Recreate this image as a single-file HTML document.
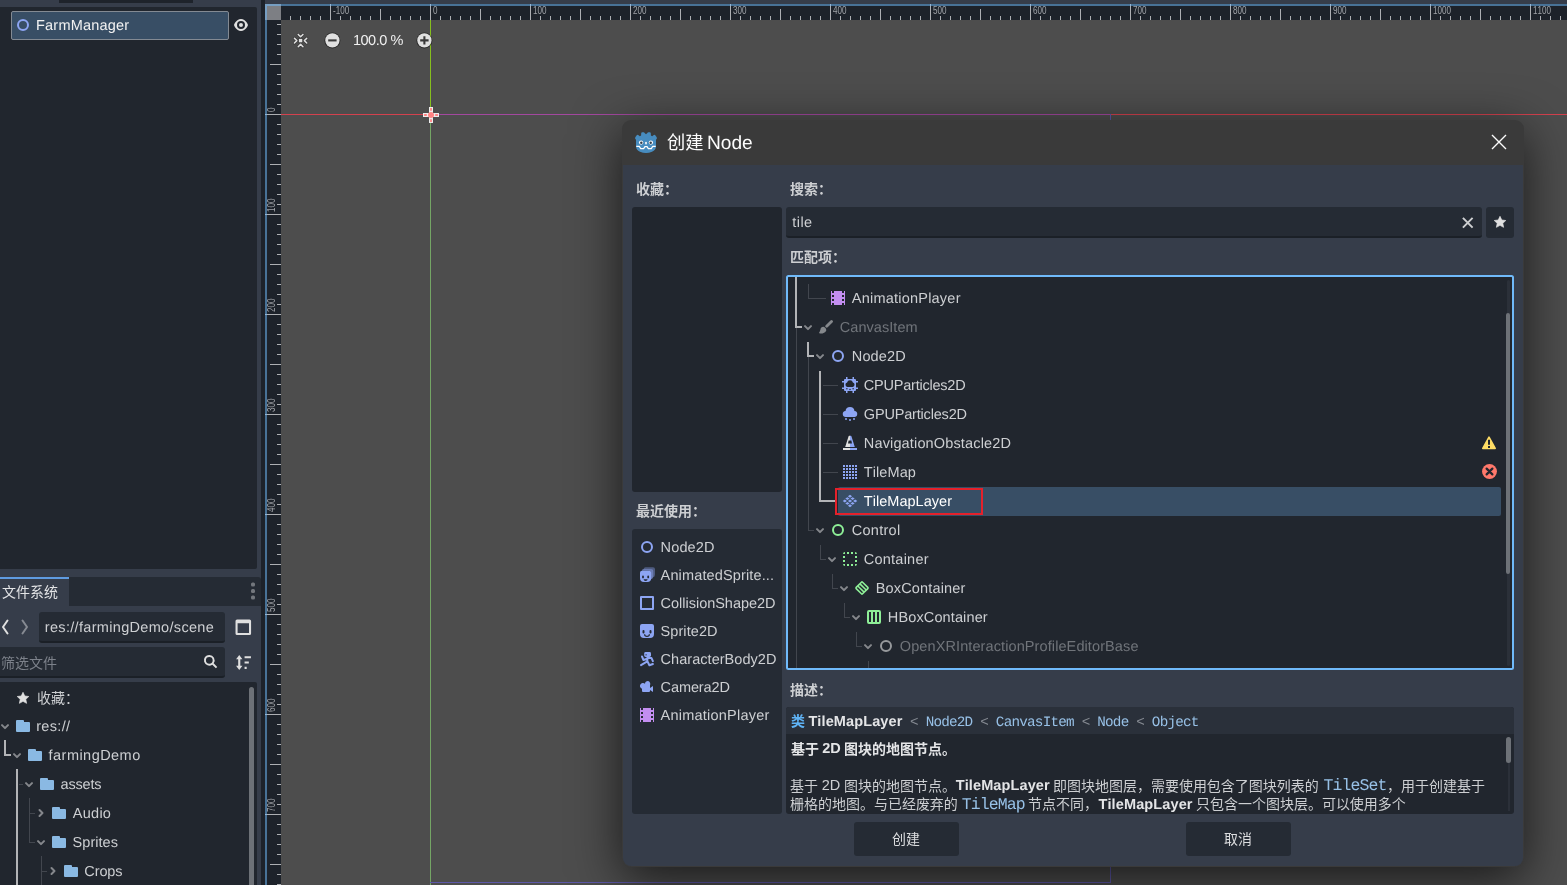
<!DOCTYPE html>
<html lang="zh"><head><meta charset="utf-8"><title>Godot - Create Node</title>
<style>
html,body{margin:0;padding:0;background:#363d4a;}
body{width:1567px;height:885px;overflow:hidden;font-family:"Liberation Sans",sans-serif;}
#root{will-change:transform;position:relative;width:1567px;height:885px;overflow:hidden;background:#363d4a;}
.b{position:absolute;box-sizing:border-box;}
.t{position:absolute;line-height:1;white-space:pre;font-family:"Liberation Sans",sans-serif;font-kerning:none;text-rendering:geometricPrecision;}
.t.m{font-family:"Liberation Mono",monospace;}
.cj{position:absolute;overflow:visible;}
.cj text{font-family:"Liberation Sans","Noto Sans CJK SC",sans-serif;white-space:pre;}
.cj text.bd{font-weight:bold;}
.ic{position:absolute;overflow:visible;}
.rl{position:absolute;line-height:1;white-space:pre;font-family:"Liberation Sans",sans-serif;font-size:10.5px;color:#a0a3a8;font-kerning:none;}
.rv{transform-origin:0 0;transform:rotate(-90deg);}
</style></head>
<body>
<div id="root">
<div class="b " style="left:59px;top:0px;width:134px;height:3px;background:#1e232b;"></div>
<div class="b " style="left:-4px;top:7px;width:261px;height:562px;background:#21262e;border-radius:2px"></div>
<div class="b " style="left:11px;top:11px;width:218px;height:29px;background:#384e65;border:1px solid #838a93;border-radius:2px"></div>
<svg class="ic" style="left:15px;top:17px;" width="16" height="16" viewBox="0 0 16 16"><circle cx="8" cy="8" r="5" fill="none" stroke="#8da5f3" stroke-width="2"/></svg>
<span class="t " style="left:36px;top:18.72px;font-size:14.5px;letter-spacing:0.21px;color:#f2f2f2">FarmManager</span>
<svg class="ic" style="left:233px;top:17px;" width="16" height="16" viewBox="0 0 16 16"><path fill="#e0e0e0" d="M8 2C3 2 1 8 1 8s2 6 7 6 7-6 7-6-2-6-7-6zm0 2a4 4 0 0 1 0 8 4 4 0 0 1 0-8zm0 2a2 2 0 0 0 0 4 2 2 0 0 0 0-4z"/></svg>
<div class="b " style="left:-4px;top:577px;width:265px;height:29px;background:#252b34;border-radius:3px 3px 0 0"></div>
<div class="b " style="left:-4px;top:577px;width:73px;height:29px;background:#363d4a;border-top:2px solid #5f9be0"></div>
<svg class="cj" role="img" aria-label="文件系统" style="left:1.8px;top:583px" width="56" height="19.6" viewBox="0 0 56 19.6" fill="#e3e4e6"><text x="0" y="14" font-size="14">文件系统</text></svg>
<svg class="ic" style="left:245px;top:583.3px;" width="16" height="16" viewBox="0 0 16 16"><g fill="#fff" fill-opacity=".36"><rect x="6" y="-.4" width="4" height="4" rx="1.500"/><rect x="6" y="6" width="4" height="4" rx="1.500"/><rect x="6" y="12.400" width="4" height="4" rx="1.500"/></g></svg>
<svg class="ic" style="left:-3px;top:619px;" width="16" height="16" viewBox="0 0 16 16"><path fill="none" stroke="#e0e0e0" stroke-width="2" stroke-linecap="round" stroke-linejoin="round" d="M10.5 1.5 6 8l4.5 6.5"/></svg>
<svg class="ic" style="left:17px;top:619px;" width="16" height="16" viewBox="0 0 16 16"><path fill="none" stroke="#fff" stroke-opacity=".4" stroke-width="2" stroke-linecap="round" stroke-linejoin="round" d="M5.5 1.5 10 8l-4.5 6.5"/></svg>
<div class="b " style="left:39px;top:612px;width:186px;height:31px;background:#252b34;border-radius:3px;border-bottom:2px solid #1b2027"></div>
<span class="t " style="left:44.8px;top:620.72px;font-size:14.5px;letter-spacing:0.32px;color:#cdcfd2">res://farmingDemo/scene</span>
<svg class="ic" style="left:234.7px;top:618.5px;" width="16.6" height="16.6" viewBox="0 0 16 16"><path fill="#e0e0e0" d="M2 .5A1.5 1.5 0 0 0 .5 2v12A1.5 1.5 0 0 0 2 15.500h12a1.5 1.5 0 0 0 1.500-1.500V2A1.5 1.5 0 0 0 14 .5zm.5 3.500h11v9.500h-11z"/></svg>
<div class="b " style="left:-4px;top:647px;width:229px;height:31px;background:#252b34;border-radius:3px;border-bottom:2px solid #1b2027"></div>
<svg class="cj" role="img" aria-label="筛选文件" style="left:1.2px;top:654px" width="56" height="19.6" viewBox="0 0 56 19.6" fill="#7c818a"><text x="0" y="14" font-size="14">筛选文件</text></svg>
<svg class="ic" style="left:202.85px;top:654.25px;" width="15.5" height="15.5" viewBox="0 0 16 16"><path fill="#e0e0e0" d="M6.5 1a5.5 5.5 0 1 0 3.1 10l3.7 3.7 1.4-1.4L11 9.6A5.5 5.5 0 0 0 6.5 1zm0 2a3.5 3.5 0 0 1 0 7 3.5 3.5 0 0 1 0-7z"/></svg>
<svg class="ic" style="left:234.7px;top:653.7px;" width="17" height="17" viewBox="0 0 16 16"><path fill="#e0e0e0" d="M4 1L1 5h2v6H1l3 4 3-4H5V5h2zm5 1v2h6V2zm0 5v2h4V7zm0 5v2h2v-2z"/></svg>
<div class="b " style="left:-4px;top:682px;width:261px;height:210px;background:#21262e;border-radius:2px"></div>
<div class="b " style="left:248.5px;top:687px;width:5px;height:210px;background:#6d7177;border-radius:2.5px"></div>
<svg class="ic" style="left:16px;top:691px;" width="14" height="14" viewBox="0 0 16 16"><path fill="#e0e0e0" d="M8 1.5l2 4.2 4.6.6-3.4 3.2.9 4.6L8 11.8l-4.1 2.3.9-4.6L1.4 6.3 6 5.7z" stroke="#e0e0e0" stroke-width=".8" stroke-linejoin="round"/></svg>
<svg class="cj" role="img" aria-label="收藏：" style="left:37px;top:689px" width="42" height="19.6" viewBox="0 0 42 19.6" fill="#cdcfd2"><text x="0" y="14" font-size="14">收藏：</text></svg>
<svg class="ic" style="left:-2.8px;top:718px;" width="16" height="16" viewBox="0 0 16 16"><path fill="none" stroke="#fff" stroke-opacity=".45" stroke-width="2" stroke-linecap="round" stroke-linejoin="round" d="M5 7.100l3 3 3-3"/></svg>
<svg class="ic" style="left:15px;top:718px;" width="16" height="16" viewBox="0 0 16 16"><path fill="#8ab9e3" d="M2 2a1 1 0 0 0-1 1v10a1 1 0 0 0 1 1h12a1 1 0 0 0 1-1V5a1 1 0 0 0-1-1H9V3a1 1 0 0 0-1-1z"/></svg>
<span class="t " style="left:36.2px;top:719.72px;font-size:14.5px;letter-spacing:0.32px;color:#cdcfd2">res://</span>
<div class="b " style="left:4px;top:740px;width:2px;height:16px;background:#b3b4b7;"></div>
<div class="b " style="left:4px;top:754px;width:7px;height:2px;background:#b3b4b7;"></div>
<svg class="ic" style="left:9.2px;top:747px;" width="16" height="16" viewBox="0 0 16 16"><path fill="none" stroke="#fff" stroke-opacity=".45" stroke-width="2" stroke-linecap="round" stroke-linejoin="round" d="M5 7.100l3 3 3-3"/></svg>
<svg class="ic" style="left:27px;top:747px;" width="16" height="16" viewBox="0 0 16 16"><path fill="#8ab9e3" d="M2 2a1 1 0 0 0-1 1v10a1 1 0 0 0 1 1h12a1 1 0 0 0 1-1V5a1 1 0 0 0-1-1H9V3a1 1 0 0 0-1-1z"/></svg>
<span class="t " style="left:48.6px;top:748.72px;font-size:14.5px;letter-spacing:0.46px;color:#cdcfd2">farmingDemo</span>
<div class="b " style="left:16px;top:769px;width:2px;height:120px;background:#b3b4b7;"></div>
<div class="b " style="left:19px;top:784px;width:4px;height:1px;background:#42464e;"></div>
<svg class="ic" style="left:21px;top:776px;" width="16" height="16" viewBox="0 0 16 16"><path fill="none" stroke="#fff" stroke-opacity=".45" stroke-width="2" stroke-linecap="round" stroke-linejoin="round" d="M5 7.100l3 3 3-3"/></svg>
<svg class="ic" style="left:39px;top:776px;" width="16" height="16" viewBox="0 0 16 16"><path fill="#8ab9e3" d="M2 2a1 1 0 0 0-1 1v10a1 1 0 0 0 1 1h12a1 1 0 0 0 1-1V5a1 1 0 0 0-1-1H9V3a1 1 0 0 0-1-1z"/></svg>
<span class="t " style="left:60.5px;top:777.72px;font-size:14.5px;letter-spacing:-0.16px;color:#cdcfd2">assets</span>
<div class="b " style="left:29px;top:798px;width:1px;height:45px;background:#42464e;"></div>
<div class="b " style="left:29px;top:813px;width:6px;height:1px;background:#42464e;"></div>
<div class="b " style="left:29px;top:842px;width:6px;height:1px;background:#42464e;"></div>
<svg class="ic" style="left:33px;top:805px;" width="16" height="16" viewBox="0 0 16 16"><path fill="none" stroke="#fff" stroke-opacity=".45" stroke-width="2" stroke-linecap="round" stroke-linejoin="round" d="M6.500 5l3 3-3 3"/></svg>
<svg class="ic" style="left:51px;top:805px;" width="16" height="16" viewBox="0 0 16 16"><path fill="#8ab9e3" d="M2 2a1 1 0 0 0-1 1v10a1 1 0 0 0 1 1h12a1 1 0 0 0 1-1V5a1 1 0 0 0-1-1H9V3a1 1 0 0 0-1-1z"/></svg>
<span class="t " style="left:72.8px;top:806.72px;font-size:14.5px;letter-spacing:0.26px;color:#cdcfd2">Audio</span>
<svg class="ic" style="left:33px;top:834px;" width="16" height="16" viewBox="0 0 16 16"><path fill="none" stroke="#fff" stroke-opacity=".45" stroke-width="2" stroke-linecap="round" stroke-linejoin="round" d="M5 7.100l3 3 3-3"/></svg>
<svg class="ic" style="left:51px;top:834px;" width="16" height="16" viewBox="0 0 16 16"><path fill="#8ab9e3" d="M2 2a1 1 0 0 0-1 1v10a1 1 0 0 0 1 1h12a1 1 0 0 0 1-1V5a1 1 0 0 0-1-1H9V3a1 1 0 0 0-1-1z"/></svg>
<span class="t " style="left:72.6px;top:835.72px;font-size:14.5px;letter-spacing:0.04px;color:#cdcfd2">Sprites</span>
<div class="b " style="left:41px;top:856px;width:1px;height:30px;background:#42464e;"></div>
<div class="b " style="left:41px;top:871px;width:6px;height:1px;background:#42464e;"></div>
<svg class="ic" style="left:45px;top:863px;" width="16" height="16" viewBox="0 0 16 16"><path fill="none" stroke="#fff" stroke-opacity=".45" stroke-width="2" stroke-linecap="round" stroke-linejoin="round" d="M6.500 5l3 3-3 3"/></svg>
<svg class="ic" style="left:63px;top:863px;" width="16" height="16" viewBox="0 0 16 16"><path fill="#8ab9e3" d="M2 2a1 1 0 0 0-1 1v10a1 1 0 0 0 1 1h12a1 1 0 0 0 1-1V5a1 1 0 0 0-1-1H9V3a1 1 0 0 0-1-1z"/></svg>
<span class="t " style="left:84.3px;top:864.72px;font-size:14.5px;letter-spacing:-0.1px;color:#cdcfd2">Crops</span>
<div class="b " style="left:261px;top:0px;width:4px;height:885px;background:#1d222a;"></div>
<div class="b " style="left:265px;top:4px;width:1302px;height:881px;background:#4d4d4d;"></div>
<div class="b " style="left:265px;top:4px;width:1302px;height:16px;background:#1d222a;"></div>
<div class="b " style="left:265px;top:4px;width:16px;height:881px;background:#1d222a;"></div>
<div class="b " style="left:265px;top:4px;width:16px;height:16px;background:#7d7f84;"></div>
<svg class="ic" style="left:0;top:0" width="1567" height="20" viewBox="0 0 1567 20"><path d="M290.5 16V20M300.5 16V20M310.5 16V20M320.5 16V20M330.5 4V20M340.5 16V20M350.5 16V20M360.5 16V20M370.5 16V20M380.5 9V20M390.5 16V20M400.5 16V20M410.5 16V20M420.5 16V20M430.5 4V20M440.5 16V20M450.5 16V20M460.5 16V20M470.5 16V20M480.5 9V20M490.5 16V20M500.5 16V20M510.5 16V20M520.5 16V20M530.5 4V20M540.5 16V20M550.5 16V20M560.5 16V20M570.5 16V20M580.5 9V20M590.5 16V20M600.5 16V20M610.5 16V20M620.5 16V20M630.5 4V20M640.5 16V20M650.5 16V20M660.5 16V20M670.5 16V20M680.5 9V20M690.5 16V20M700.5 16V20M710.5 16V20M720.5 16V20M730.5 4V20M740.5 16V20M750.5 16V20M760.5 16V20M770.5 16V20M780.5 9V20M790.5 16V20M800.5 16V20M810.5 16V20M820.5 16V20M830.5 4V20M840.5 16V20M850.5 16V20M860.5 16V20M870.5 16V20M880.5 9V20M890.5 16V20M900.5 16V20M910.5 16V20M920.5 16V20M930.5 4V20M940.5 16V20M950.5 16V20M960.5 16V20M970.5 16V20M980.5 9V20M990.5 16V20M1000.5 16V20M1010.5 16V20M1020.5 16V20M1030.5 4V20M1040.5 16V20M1050.5 16V20M1060.5 16V20M1070.5 16V20M1080.5 9V20M1090.5 16V20M1100.5 16V20M1110.5 16V20M1120.5 16V20M1130.5 4V20M1140.5 16V20M1150.5 16V20M1160.5 16V20M1170.5 16V20M1180.5 9V20M1190.5 16V20M1200.5 16V20M1210.5 16V20M1220.5 16V20M1230.5 4V20M1240.5 16V20M1250.5 16V20M1260.5 16V20M1270.5 16V20M1280.5 9V20M1290.5 16V20M1300.5 16V20M1310.5 16V20M1320.5 16V20M1330.5 4V20M1340.5 16V20M1350.5 16V20M1360.5 16V20M1370.5 16V20M1380.5 9V20M1390.5 16V20M1400.5 16V20M1410.5 16V20M1420.5 16V20M1430.5 4V20M1440.5 16V20M1450.5 16V20M1460.5 16V20M1470.5 16V20M1480.5 9V20M1490.5 16V20M1500.5 16V20M1510.5 16V20M1520.5 16V20M1530.5 4V20M1540.5 16V20M1550.5 16V20M1560.5 16V20" stroke="#adafb3" stroke-width="1" fill="none" shape-rendering="crispEdges"/></svg>
<svg class="ic" style="left:0;top:0" width="281" height="885" viewBox="0 0 281 885"><path d="M277 24.5H281M277 34.5H281M277 44.5H281M277 54.5H281M270 64.5H281M277 74.5H281M277 84.5H281M277 94.5H281M277 104.5H281M265 114.5H281M277 124.5H281M277 134.5H281M277 144.5H281M277 154.5H281M270 164.5H281M277 174.5H281M277 184.5H281M277 194.5H281M277 204.5H281M265 214.5H281M277 224.5H281M277 234.5H281M277 244.5H281M277 254.5H281M270 264.5H281M277 274.5H281M277 284.5H281M277 294.5H281M277 304.5H281M265 314.5H281M277 324.5H281M277 334.5H281M277 344.5H281M277 354.5H281M270 364.5H281M277 374.5H281M277 384.5H281M277 394.5H281M277 404.5H281M265 414.5H281M277 424.5H281M277 434.5H281M277 444.5H281M277 454.5H281M270 464.5H281M277 474.5H281M277 484.5H281M277 494.5H281M277 504.5H281M265 514.5H281M277 524.5H281M277 534.5H281M277 544.5H281M277 554.5H281M270 564.5H281M277 574.5H281M277 584.5H281M277 594.5H281M277 604.5H281M265 614.5H281M277 624.5H281M277 634.5H281M277 644.5H281M277 654.5H281M270 664.5H281M277 674.5H281M277 684.5H281M277 694.5H281M277 704.5H281M265 714.5H281M277 724.5H281M277 734.5H281M277 744.5H281M277 754.5H281M270 764.5H281M277 774.5H281M277 784.5H281M277 794.5H281M277 804.5H281M265 814.5H281M277 824.5H281M277 834.5H281M277 844.5H281M277 854.5H281M270 864.5H281M277 874.5H281M277 884.5H281" stroke="#adafb3" stroke-width="1" fill="none" shape-rendering="crispEdges"/></svg>
<span class="rl" style="left:333.4px;top:4.5px;transform-origin:0 0;transform:scaleX(.77)">-100</span>
<span class="rl" style="left:433.4px;top:4.5px;transform-origin:0 0;transform:scaleX(.77)">0</span>
<span class="rl" style="left:533.4px;top:4.5px;transform-origin:0 0;transform:scaleX(.77)">100</span>
<span class="rl" style="left:633.4px;top:4.5px;transform-origin:0 0;transform:scaleX(.77)">200</span>
<span class="rl" style="left:733.4px;top:4.5px;transform-origin:0 0;transform:scaleX(.77)">300</span>
<span class="rl" style="left:833.4px;top:4.5px;transform-origin:0 0;transform:scaleX(.77)">400</span>
<span class="rl" style="left:933.4px;top:4.5px;transform-origin:0 0;transform:scaleX(.77)">500</span>
<span class="rl" style="left:1033.4px;top:4.5px;transform-origin:0 0;transform:scaleX(.77)">600</span>
<span class="rl" style="left:1133.4px;top:4.5px;transform-origin:0 0;transform:scaleX(.77)">700</span>
<span class="rl" style="left:1233.4px;top:4.5px;transform-origin:0 0;transform:scaleX(.77)">800</span>
<span class="rl" style="left:1333.4px;top:4.5px;transform-origin:0 0;transform:scaleX(.77)">900</span>
<span class="rl" style="left:1433.4px;top:4.5px;transform-origin:0 0;transform:scaleX(.77)">1000</span>
<span class="rl" style="left:1533.4px;top:4.5px;transform-origin:0 0;transform:scaleX(.77)">1100</span>
<span class="rl rv" style="left:265.8px;top:112.2px;transform:rotate(-90deg) scaleX(.77)">0</span>
<span class="rl rv" style="left:265.8px;top:212.2px;transform:rotate(-90deg) scaleX(.77)">100</span>
<span class="rl rv" style="left:265.8px;top:312.2px;transform:rotate(-90deg) scaleX(.77)">200</span>
<span class="rl rv" style="left:265.8px;top:412.2px;transform:rotate(-90deg) scaleX(.77)">300</span>
<span class="rl rv" style="left:265.8px;top:512.2px;transform:rotate(-90deg) scaleX(.77)">400</span>
<span class="rl rv" style="left:265.8px;top:612.2px;transform:rotate(-90deg) scaleX(.77)">500</span>
<span class="rl rv" style="left:265.8px;top:712.2px;transform:rotate(-90deg) scaleX(.77)">600</span>
<span class="rl rv" style="left:265.8px;top:812.2px;transform:rotate(-90deg) scaleX(.77)">700</span>
<div class="b " style="left:265px;top:4px;width:1302px;height:2px;background:rgba(112,186,250,.53);"></div>
<div class="b " style="left:265px;top:6px;width:2px;height:879px;background:rgba(112,186,250,.53);"></div>
<div class="b " style="left:281px;top:114px;width:1286px;height:1px;background:#d3414e;"></div>
<div class="b " style="left:430px;top:20px;width:1px;height:94px;background:#86bf1e;"></div>
<div class="b " style="left:430px;top:114px;width:1px;height:771px;background:#74a565;"></div>
<div class="b " style="left:430px;top:114px;width:680px;height:1px;background:#a3489f;"></div>
<div class="b " style="left:1110px;top:114px;width:1px;height:768px;background:#5d58a8;"></div>
<div class="b " style="left:430px;top:882px;width:681px;height:1px;background:#5d58a8;"></div>
<svg class="ic" style="left:422.5px;top:106.5px;" width="16" height="16" viewBox="0 0 16 16"><path fill="#ececec" d="M6 0h4v6h6v4h-6v6H6v-6H0V6h6z"/><circle cx="8" cy="8" r="3" fill="#ff8484"/><path fill="#ff8484" d="M7.1 1.1h1.8v2.7H7.1zm0 11.1h1.8v2.7H7.1zM1.100 7.100h2.700v1.800H1.100zm11.100 0h2.700v1.800h-2.700z"/></svg>
<svg class="ic" style="left:292.6px;top:32.5px;" width="15.2" height="15.2" viewBox="0 0 16 16"><g fill="none" stroke="#2e2e2e" stroke-opacity=".7" stroke-width="3" stroke-linecap="round" stroke-linejoin="round"><path d="M5.5 1.5 8 4l2.5-2.5M5.5 14.5 8 12l2.5 2.5M1.5 5.5 4 8l-2.5 2.5M14.5 5.5 12 8l2.5 2.5"/></g><rect x="5.5" y="5.5" width="5" height="5" fill="#2e2e2e" fill-opacity=".7"/><g fill="none" stroke="#e0e0e0" stroke-width="1.6" stroke-linecap="round" stroke-linejoin="round"><path d="M5.5 1.5 8 4l2.5-2.5M5.5 14.5 8 12l2.5 2.5M1.5 5.5 4 8l-2.5 2.5M14.5 5.5 12 8l2.5 2.5"/></g><rect x="6.2" y="6.2" width="3.6" height="3.6" fill="#e0e0e0"/></svg>
<svg class="ic" style="left:323.6px;top:31.6px;" width="16.8" height="16.8" viewBox="0 0 16 16"><circle cx="8" cy="8" r="7.6" fill="#000" fill-opacity=".5"/><circle cx="8" cy="8" r="6.8" fill="#e0e0e0"/><path d="M4 7h8v2H4z" fill="#3a3a3a"/></svg>
<span class="t " style="left:352.9px;top:33.72px;font-size:14.5px;letter-spacing:-0.47px;color:#f0f0f0">100.0 %</span>
<svg class="ic" style="left:415.6px;top:31.6px;" width="16.8" height="16.8" viewBox="0 0 16 16"><circle cx="8" cy="8" r="7.6" fill="#000" fill-opacity=".5"/><circle cx="8" cy="8" r="6.8" fill="#e0e0e0"/><path d="M7 4v3H4v2h3v3h2V9h3V7H9V4z" fill="#3a3a3a"/></svg>
<div class="b " style="left:622px;top:120px;width:902px;height:747px;background:#3a3a3a;border-radius:9px;box-shadow:0 12px 50px 0 rgba(0,0,0,.68)"></div>
<div class="b " style="left:623px;top:165px;width:900px;height:701px;background:#363d4a;border-radius:0 0 8px 8px"></div>
<svg class="ic" style="left:635px;top:131.7px;" width="22" height="22" viewBox="0 0 22 22"><path fill="#478cbf" d="M6.200 1.300Q6.200 .2 7.400 .2L8.600 .2Q9.400 .2 9.600 1L11 2.300 12.400 1Q12.600 .2 13.400 .2L14.600 .2Q15.800 .2 15.800 1.300L15.900 3.600 17.200 4.300 18.800 3Q19.600 2.500 20.300 3.300L21.700 5.300Q22.200 6.200 21.600 7L21 7.800 21 14.300Q21 18 17 19.800 11 22.300 5 19.800 1 18 1 14.300L1 7.800 .4 7Q-.2 6.200 .3 5.300L1.700 3.300Q2.400 2.500 3.200 3L4.800 4.300 6.100 3.600z"/><path fill="none" stroke="#fff" stroke-width="1.150" stroke-linejoin="round" d="M1.300 14.400h3l1.400 2.200h3l1.200-2h2.200l1.200 2h3l1.400-2.200h3"/><circle cx="6.100" cy="10.600" r="2.150" fill="#fff"/><circle cx="15.900" cy="10.600" r="2.150" fill="#fff"/><circle cx="6.300" cy="10.700" r="1.250" fill="#333f4d"/><circle cx="15.700" cy="10.700" r="1.250" fill="#333f4d"/><rect x="10.200" y="9.700" width="1.600" height="2.800" rx=".8" fill="#fff"/></svg>
<svg class="cj" role="img" aria-label="创建" style="left:667px;top:130.7px" width="36.6" height="25.62" viewBox="0 0 36.6 25.62" fill="#fcfcfc"><text x="0" y="18.3" font-size="18.3">创建</text></svg>
<span class="t " style="left:707px;top:133.78px;font-size:19.16px;letter-spacing:-0.02px;color:#fcfcfc">Node</span>
<svg class="ic" style="left:1490.5px;top:134.3px;" width="16" height="16" viewBox="0 0 16 16"><path fill="none" stroke="#fcfcfc" stroke-width="1.4" d="M1 1l14 14M15 1L1 15"/></svg>
<svg class="cj" role="img" aria-label="收藏：" style="left:636px;top:180px" width="42" height="19.6" viewBox="0 0 42 19.6" fill="#cdcfd2"><text class="bd" x="0" y="14" font-size="14">收藏：</text></svg>
<div class="b " style="left:632px;top:207px;width:150px;height:285px;background:#21262e;border-radius:3px"></div>
<svg class="cj" role="img" aria-label="最近使用：" style="left:636px;top:501.6px" width="70" height="19.6" viewBox="0 0 70 19.6" fill="#cdcfd2"><text class="bd" x="0" y="14" font-size="14">最近使用：</text></svg>
<div class="b " style="left:632px;top:529px;width:150px;height:285px;background:#252b34;border-radius:3px"></div>
<svg class="ic" style="left:639px;top:539px;" width="16" height="16" viewBox="0 0 16 16"><circle cx="8" cy="8" r="5" fill="none" stroke="#8da5f3" stroke-width="2"/></svg>
<span class="t " style="left:660.6px;top:540.72px;font-size:14.5px;letter-spacing:0.13px;color:#cdcfd2">Node2D</span>
<svg class="ic" style="left:639px;top:567px;" width="16" height="16" viewBox="0 0 16 16"><path fill="#8da5f3" fill-opacity=".4" d="M6.600 .2a2 2 0 0 0-2 1.800h7.200a2 2 0 0 1 2 2v6.400a3 3 0 0 0 2.200-3V2.200a2 2 0 0 0-2-2z"/><path fill="#8da5f3" fill-opacity=".65" d="M4.800 2a2 2 0 0 0-2 1.800H10a2 2 0 0 1 2 2v6.400a3 3 0 0 0 2.200-3V4a2 2 0 0 0-2-2z"/><path fill="#8da5f3" d="M3 3.800a2 2 0 0 0-2 2V11a4 4 0 0 0 4 4h3.200a4 4 0 0 0 4-4V5.800a2 2 0 0 0-2-2zm1 4.700a.9.9 0 0 1 .9.9v1a.9.9 0 0 1-1.800 0v-1a.9.9 0 0 1 .9-.9zm5.200 0a.9.9 0 0 1 .9.9v1a.9.9 0 0 1-1.800 0v-1a.9.9 0 0 1 .9-.9zM4.600 12.300h4a2 1.700 0 0 1-4 0z"/></svg>
<span class="t " style="left:660.6px;top:568.72px;font-size:14.5px;letter-spacing:0.14px;color:#cdcfd2">AnimatedSprite...</span>
<svg class="ic" style="left:639px;top:595px;" width="16" height="16" viewBox="0 0 16 16"><path fill="none" stroke="#8da5f3" stroke-width="2" stroke-linejoin="round" d="M2 2h12v12H2z"/></svg>
<span class="t " style="left:660.6px;top:596.72px;font-size:14.5px;letter-spacing:-0.02px;color:#cdcfd2">CollisionShape2D</span>
<svg class="ic" style="left:639px;top:623px;" width="16" height="16" viewBox="0 0 16 16"><path fill="#8da5f3" d="M3 1a2 2 0 0 0-2 2v8a4 4 0 0 0 4 4h6a4 4 0 0 0 4-4V3a2 2 0 0 0-2-2zm1.500 6a1 1 0 0 1 1 1v1.500a1 1 0 0 1-2 0V8a1 1 0 0 1 1-1zm7 0a1 1 0 0 1 1 1v1.500a1 1 0 0 1-2 0V8a1 1 0 0 1 1-1zM5 11.300h1.200a1.800 1.500 0 0 0 3.600 0H11a3 2.700 0 0 1-6 0z"/></svg>
<span class="t " style="left:660.6px;top:624.72px;font-size:14.5px;letter-spacing:0.07px;color:#cdcfd2">Sprite2D</span>
<svg class="ic" style="left:639px;top:651px;" width="16" height="16" viewBox="0 0 16 16"><g fill="none" stroke="#8da5f3" stroke-width="2" stroke-linecap="round" stroke-linejoin="round"><path d="M8.500 5.500 8.300 10.400 2 14.100M8.500 10.500l1.900 3.700 3.500-1.200M8.200 7.700 4.500 9 3 5.500M9 7.100h3.500l1.400 3.100"/></g><rect x="5.200" y="1" width="6.800" height="4.900" rx="1.400" fill="#8da5f3"/><rect x="6.300" y="3.200" width="1.700" height="1.200" fill="#252b34" fill-opacity=".6"/></svg>
<span class="t " style="left:660.6px;top:652.72px;font-size:14.5px;letter-spacing:0.04px;color:#cdcfd2">CharacterBody2D</span>
<svg class="ic" style="left:639px;top:679px;" width="16" height="16" viewBox="0 0 16 16"><path fill="#8da5f3" d="M9 2a3 3 0 0 0-3 2.777 3 3 0 1 0-3 5.047V12a1 1 0 0 0 1 1h6a1 1 0 0 0 1-1v-1l3 2V7l-3 2V6.23A3 3 0 0 0 9 2z"/></svg>
<span class="t " style="left:660.6px;top:680.72px;font-size:14.5px;letter-spacing:-0.1px;color:#cdcfd2">Camera2D</span>
<svg class="ic" style="left:639px;top:707px;" width="16" height="16" viewBox="0 0 16 16"><path fill="#c38ef1" d="M1 1v14h1v-2h2v2h8v-2h2v2h1V1h-1v2h-2V1H4v2H2V1zm1 4h2v2H2zm10 0h2v2h-2zM2 9h2v2H2zm10 0h2v2h-2z"/></svg>
<span class="t " style="left:660.6px;top:708.72px;font-size:14.5px;letter-spacing:0.22px;color:#cdcfd2">AnimationPlayer</span>
<svg class="cj" role="img" aria-label="搜索：" style="left:790px;top:180px" width="42" height="19.6" viewBox="0 0 42 19.6" fill="#cdcfd2"><text class="bd" x="0" y="14" font-size="14">搜索：</text></svg>
<div class="b " style="left:786px;top:207px;width:696px;height:31px;background:#252b34;border-radius:3px;border-bottom:2px solid #1b2027"></div>
<span class="t " style="left:792.3px;top:215.72px;font-size:14.5px;letter-spacing:0.42px;color:#cdcfd2">tile</span>
<svg class="ic" style="left:1460.25px;top:214.85px;" width="15.5" height="15.5" viewBox="0 0 16 16"><path fill="none" stroke="#fff" stroke-opacity=".78" stroke-width="2" d="M3 3l10 10M13 3L3 13"/></svg>
<div class="b " style="left:1486px;top:207px;width:28px;height:31px;background:#252b34;border-radius:3px"></div>
<svg class="ic" style="left:1493px;top:215px;" width="14" height="14" viewBox="0 0 16 16"><path fill="#e0e0e0" d="M8 1.5l2 4.2 4.6.6-3.4 3.2.9 4.6L8 11.8l-4.1 2.3.9-4.6L1.4 6.3 6 5.700z" stroke="#e0e0e0" stroke-width=".8" stroke-linejoin="round"/></svg>
<svg class="cj" role="img" aria-label="匹配项：" style="left:790px;top:248px" width="56" height="19.6" viewBox="0 0 56 19.6" fill="#cdcfd2"><text class="bd" x="0" y="14" font-size="14">匹配项：</text></svg>
<div class="b " style="left:786px;top:275px;width:728px;height:395px;background:#21262e;border:2px solid #70bafa;border-radius:2.5px"></div>
<div class="b " style="left:1506.5px;top:280px;width:3.2px;height:386px;background:#2b3039;border-radius:1.6px"></div>
<div class="b " style="left:1505.7px;top:313px;width:4.8px;height:261px;background:#6d7177;border-radius:2.4px"></div>
<div class="b " style="left:838px;top:487px;width:663px;height:29px;background:#384e65;border-radius:2px"></div>
<div class="b " style="left:795px;top:277px;width:2px;height:51px;background:#b3b4b7;"></div>
<div class="b " style="left:795px;top:326px;width:7px;height:2px;background:#b3b4b7;"></div>
<div class="b " style="left:808px;top:284px;width:1px;height:15px;background:#42464e;"></div>
<div class="b " style="left:808px;top:298px;width:18px;height:1px;background:#42464e;"></div>
<div class="b " style="left:796px;top:328px;width:1px;height:340px;background:#42464e;"></div>
<div class="b " style="left:807px;top:342px;width:2px;height:15px;background:#b3b4b7;"></div>
<div class="b " style="left:807px;top:355px;width:7px;height:2px;background:#b3b4b7;"></div>
<div class="b " style="left:808px;top:357px;width:1px;height:174px;background:#42464e;"></div>
<div class="b " style="left:808px;top:530px;width:6px;height:1px;background:#42464e;"></div>
<div class="b " style="left:819px;top:371px;width:2px;height:131px;background:#b3b4b7;"></div>
<div class="b " style="left:819px;top:500px;width:17px;height:2px;background:#b3b4b7;"></div>
<div class="b " style="left:823px;top:385px;width:15px;height:1px;background:#42464e;"></div>
<div class="b " style="left:823px;top:414px;width:15px;height:1px;background:#42464e;"></div>
<div class="b " style="left:823px;top:443px;width:15px;height:1px;background:#42464e;"></div>
<div class="b " style="left:823px;top:472px;width:15px;height:1px;background:#42464e;"></div>
<div class="b " style="left:820px;top:545px;width:1px;height:15px;background:#42464e;"></div>
<div class="b " style="left:820px;top:559px;width:6px;height:1px;background:#42464e;"></div>
<div class="b " style="left:832px;top:574px;width:1px;height:15px;background:#42464e;"></div>
<div class="b " style="left:832px;top:588px;width:6px;height:1px;background:#42464e;"></div>
<div class="b " style="left:844px;top:603px;width:1px;height:15px;background:#42464e;"></div>
<div class="b " style="left:844px;top:617px;width:6px;height:1px;background:#42464e;"></div>
<div class="b " style="left:856px;top:632px;width:1px;height:15px;background:#42464e;"></div>
<div class="b " style="left:856px;top:646px;width:6px;height:1px;background:#42464e;"></div>
<div class="b " style="left:868px;top:661px;width:1px;height:7px;background:#42464e;"></div>
<svg class="ic" style="left:830px;top:290px;" width="16" height="16" viewBox="0 0 16 16"><path fill="#c38ef1" d="M1 1v14h1v-2h2v2h8v-2h2v2h1V1h-1v2h-2V1H4v2H2V1zm1 4h2v2H2zm10 0h2v2h-2zM2 9h2v2H2zm10 0h2v2h-2z"/></svg>
<span class="t " style="left:851.8px;top:291.72px;font-size:14.5px;letter-spacing:0.22px;color:#cdcfd2">AnimationPlayer</span>
<svg class="ic" style="left:800px;top:319px;" width="16" height="16" viewBox="0 0 16 16"><path fill="none" stroke="#fff" stroke-opacity=".45" stroke-width="2" stroke-linecap="round" stroke-linejoin="round" d="M5 7.100l3 3 3-3"/></svg>
<svg class="ic" style="left:818px;top:319px;" width="16" height="16" viewBox="0 0 16 16"><g opacity=".45"><path d="M13.500 2.500 8.700 7.300" stroke="#fff" stroke-width="2.800" stroke-linecap="round" fill="none"/><path fill="#fff" d="M6.300 8 8 9.700a2.700 2.700 0 0 1-.7 3.300C5.900 14.400 3.200 15 .9 14c1.200-1.300 1.100-2.600 1.600-3.500A2.600 2.600 0 0 1 6.300 8z"/></g></svg>
<span class="t " style="left:839.8px;top:320.72px;font-size:14.5px;letter-spacing:0.05px;color:#70747a">CanvasItem</span>
<svg class="ic" style="left:812px;top:348px;" width="16" height="16" viewBox="0 0 16 16"><path fill="none" stroke="#fff" stroke-opacity=".45" stroke-width="2" stroke-linecap="round" stroke-linejoin="round" d="M5 7.100l3 3 3-3"/></svg>
<svg class="ic" style="left:830px;top:348px;" width="16" height="16" viewBox="0 0 16 16"><circle cx="8" cy="8" r="5" fill="none" stroke="#8da5f3" stroke-width="2"/></svg>
<span class="t " style="left:851.8px;top:349.72px;font-size:14.5px;letter-spacing:0.13px;color:#cdcfd2">Node2D</span>
<svg class="ic" style="left:842px;top:377px;" width="16" height="16" viewBox="0 0 16 16"><path fill="#8da5f3" d="M4 0v2H3a1 1 0 0 0-1 1v1H0v1.500h2v5H0V12h2v1a1 1 0 0 0 1 1h1v2h1.500v-2h5v2H12v-2h1a1 1 0 0 0 1-1v-1h2v-1.500h-2v-5h2V4h-2V3a1 1 0 0 0-1-1h-1V0h-1.500v2h-5V0z"/><path fill="#21262e" d="M8 3.200a3 3 0 0 0-2.900 2.400A2.200 2.200 0 0 0 5.300 9.900h5.400a2.200 2.200 0 0 0 .2-4.300A3 3 0 0 0 8 3.200z"/><circle cx="4.900" cy="11.700" r=".75" fill="#21262e"/><circle cx="11.100" cy="11.700" r=".75" fill="#21262e"/><circle cx="8" cy="12.400" r=".75" fill="#21262e"/></svg>
<span class="t " style="left:863.8px;top:378.72px;font-size:14.5px;letter-spacing:-0.22px;color:#cdcfd2">CPUParticles2D</span>
<svg class="ic" style="left:842px;top:406px;" width="16" height="16" viewBox="0 0 16 16"><path fill="#8da5f3" d="M8 1a4.5 4.5 0 0 0-4.473 4.012A3 3 0 0 0 4 11h8a3 3 0 0 0 .473-5.988A4.5 4.5 0 0 0 8 1z"/><circle cx="4" cy="13" r="1" fill="#8da5f3"/><circle cx="12" cy="13" r="1" fill="#8da5f3"/><circle cx="8" cy="14" r="1" fill="#8da5f3"/></svg>
<span class="t " style="left:863.8px;top:407.72px;font-size:14.5px;letter-spacing:-0.18px;color:#cdcfd2">GPUParticles2D</span>
<svg class="ic" style="left:842px;top:435px;" width="16" height="16" viewBox="0 0 16 16"><path fill="#e0e0e0" d="M8 .7H7.200Q6.700 .7 6.500 1.400L3.200 12H8z"/><path fill="#8da5f3" d="M8 .7h.8q.5 0 .7 .7L12.800 12H8z"/><path fill="#21262e" d="M6.600 5.500h2.800l.6 3.100H6z"/><path fill="#e0e0e0" d="M1 13h7v2H1z"/><path fill="#8da5f3" d="M8 13h7v2H8z"/></svg>
<span class="t " style="left:863.8px;top:436.72px;font-size:14.5px;letter-spacing:0.15px;color:#cdcfd2">NavigationObstacle2D</span>
<svg class="ic" style="left:842px;top:464px;" width="16" height="16" viewBox="0 0 16 16"><path fill="#8da5f3" d="M1 1h2v2h-2zM4 1h2v2h-2zM7 1h2v2h-2zM10 1h2v2h-2zM13 1h2v2h-2zM1 4h2v2h-2zM4 4h2v2h-2zM7 4h2v2h-2zM10 4h2v2h-2zM13 4h2v2h-2zM1 7h2v2h-2zM4 7h2v2h-2zM7 7h2v2h-2zM10 7h2v2h-2zM13 7h2v2h-2zM1 10h2v2h-2zM4 10h2v2h-2zM7 10h2v2h-2zM10 10h2v2h-2zM13 10h2v2h-2zM1 13h2v2h-2zM4 13h2v2h-2zM7 13h2v2h-2zM10 13h2v2h-2zM13 13h2v2h-2z"/></svg>
<span class="t " style="left:863.8px;top:465.72px;font-size:14.5px;letter-spacing:0.08px;color:#cdcfd2">TileMap</span>
<svg class="ic" style="left:842px;top:493px;" width="16" height="16" viewBox="0 0 16 16"><path fill="#8da5f3" d="M5.9 3.2l2.1-1.45 2.1 1.45-2.1 1.45zM3.3 5.6l2.1-1.45 2.1 1.45-2.1 1.45zM8.5 5.6l2.1-1.45 2.1 1.45-2.1 1.45zM0.7 8l2.1-1.45 2.1 1.45-2.1 1.45zM5.9 8l2.1-1.45 2.1 1.45-2.1 1.45zM11.1 8l2.1-1.45 2.1 1.45-2.1 1.45zM3.3 10.4l2.1-1.45 2.1 1.45-2.1 1.45zM8.5 10.4l2.1-1.45 2.1 1.45-2.1 1.45zM5.9 12.8l2.1-1.45 2.1 1.45-2.1 1.45z"/></svg>
<span class="t " style="left:863.8px;top:494.72px;font-size:14.5px;letter-spacing:0.03px;color:#ffffff">TileMapLayer</span>
<svg class="ic" style="left:812px;top:522px;" width="16" height="16" viewBox="0 0 16 16"><path fill="none" stroke="#fff" stroke-opacity=".45" stroke-width="2" stroke-linecap="round" stroke-linejoin="round" d="M5 7.100l3 3 3-3"/></svg>
<svg class="ic" style="left:830px;top:522px;" width="16" height="16" viewBox="0 0 16 16"><circle cx="8" cy="8" r="5" fill="none" stroke="#8eef97" stroke-width="2"/></svg>
<span class="t " style="left:851.8px;top:523.72px;font-size:14.5px;letter-spacing:0.27px;color:#cdcfd2">Control</span>
<svg class="ic" style="left:824px;top:551px;" width="16" height="16" viewBox="0 0 16 16"><path fill="none" stroke="#fff" stroke-opacity=".45" stroke-width="2" stroke-linecap="round" stroke-linejoin="round" d="M5 7.100l3 3 3-3"/></svg>
<svg class="ic" style="left:842px;top:551px;" width="16" height="16" viewBox="0 0 16 16"><path fill="#8eef97" d="M3 1a2 2 0 0 0-2 2h2zm2 0v2h2V1zm4 0v2h2V1zm4 0v2h2a2 2 0 0 0-2-2zM1 5v2h2V5zm12 0v2h2V5zM1 9v2h2V9zm12 0v2h2V9zM1 13a2 2 0 0 0 2 2v-2zm12 0v2a2 2 0 0 0 2-2zm-8 0v2h2v-2zm4 0v2h2v-2z"/></svg>
<span class="t " style="left:863.8px;top:552.72px;font-size:14.5px;letter-spacing:0.23px;color:#cdcfd2">Container</span>
<svg class="ic" style="left:836px;top:580px;" width="16" height="16" viewBox="0 0 16 16"><path fill="none" stroke="#fff" stroke-opacity=".45" stroke-width="2" stroke-linecap="round" stroke-linejoin="round" d="M5 7.100l3 3 3-3"/></svg>
<svg class="ic" style="left:854px;top:580px;" width="16" height="16" viewBox="0 0 16 16"><g transform="rotate(-45 8 8)"><path fill="#8eef97" d="M4.300 2.700a1.600 1.600 0 0 0-1.600 1.600v7.400a1.600 1.600 0 0 0 1.600 1.600h7.400a1.600 1.600 0 0 0 1.600-1.600V4.300a1.600 1.600 0 0 0-1.600-1.600zm0 1.600h1.400v7.400H4.300zm3 0h1.400v7.400H7.300zm3 0h1.400v7.400h-1.400z"/></g></svg>
<span class="t " style="left:875.8px;top:581.72px;font-size:14.5px;letter-spacing:0.15px;color:#cdcfd2">BoxContainer</span>
<svg class="ic" style="left:848px;top:609px;" width="16" height="16" viewBox="0 0 16 16"><path fill="none" stroke="#fff" stroke-opacity=".45" stroke-width="2" stroke-linecap="round" stroke-linejoin="round" d="M5 7.100l3 3 3-3"/></svg>
<svg class="ic" style="left:866px;top:609px;" width="16" height="16" viewBox="0 0 16 16"><path fill="#8eef97" d="M3 1a2 2 0 0 0-2 2v10a2 2 0 0 0 2 2h10a2 2 0 0 0 2-2V3a2 2 0 0 0-2-2zm0 2h2v10H3zm4 0h2v10H7zm4 0h2v10h-2z"/></svg>
<span class="t " style="left:887.8px;top:610.72px;font-size:14.5px;letter-spacing:0.13px;color:#cdcfd2">HBoxContainer</span>
<svg class="ic" style="left:860px;top:638px;" width="16" height="16" viewBox="0 0 16 16"><path fill="none" stroke="#fff" stroke-opacity=".45" stroke-width="2" stroke-linecap="round" stroke-linejoin="round" d="M5 7.100l3 3 3-3"/></svg>
<svg class="ic" style="left:878px;top:638px;opacity:.62" width="16" height="16" viewBox="0 0 16 16"><circle cx="8" cy="8" r="5" fill="none" stroke="#e0e0e0" stroke-width="2"/></svg>
<span class="t " style="left:899.8px;top:639.72px;font-size:14.5px;letter-spacing:0.1px;color:#70747a">OpenXRInteractionProfileEditorBase</span>
<svg class="ic" style="left:1481px;top:435.1px;" width="16" height="16" viewBox="0 0 16 16"><path fill="#ffdd65" stroke="#ffdd65" stroke-width="1.6" stroke-linejoin="round" d="M8 2.200 14.200 13.400H1.800z"/><path fill="#21262e" d="M7 4.800h2v5H7zm0 6.200h2v1.900H7z"/></svg>
<svg class="ic" style="left:1480.5px;top:463.4px;" width="17" height="17" viewBox="0 0 16 16"><circle cx="8" cy="8" r="7" fill="#ff786b"/><path fill="none" stroke="#21262e" stroke-width="2.1" stroke-linecap="round" d="M5.300 5.300l5.400 5.400M10.700 5.300l-5.400 5.400"/></svg>
<div class="b " style="left:835px;top:488px;width:148px;height:27px;background:transparent;border:2px solid #e5212b"></div>
<svg class="cj" role="img" aria-label="描述：" style="left:790px;top:680.6px" width="42" height="19.6" viewBox="0 0 42 19.6" fill="#cdcfd2"><text class="bd" x="0" y="14" font-size="14">描述：</text></svg>
<div class="b " style="left:786px;top:707px;width:728px;height:107px;background:#21262e;border-radius:3px"></div>
<div class="b " style="left:786px;top:707px;width:728px;height:27px;background:#2a303a;border-radius:3px 3px 0 0"></div>
<svg class="cj" role="img" aria-label="类" style="left:791px;top:712px" width="14" height="19.6" viewBox="0 0 14 19.6" fill="#5fb3f5"><text class="bd" x="0" y="14" font-size="14">类</text></svg><span class="t " style="left:808.4px;top:714.72px;font-size:14.5px;letter-spacing:0.12px;color:#e4e5e7;font-weight:bold">TileMapLayer</span>
<span class="t m" style="left:902.24px;top:716.14px;font-size:14.3px;letter-spacing:-0.78px;color:#858a92"> &lt; </span><span class="t m" style="left:925.64px;top:716.14px;font-size:14.3px;letter-spacing:-0.78px;color:#97c0e6">Node2D</span><span class="t m" style="left:972.44px;top:716.14px;font-size:14.3px;letter-spacing:-0.78px;color:#858a92"> &lt; </span><span class="t m" style="left:995.84px;top:716.14px;font-size:14.3px;letter-spacing:-0.78px;color:#97c0e6">CanvasItem</span><span class="t m" style="left:1073.84px;top:716.14px;font-size:14.3px;letter-spacing:-0.78px;color:#858a92"> &lt; </span><span class="t m" style="left:1097.24px;top:716.14px;font-size:14.3px;letter-spacing:-0.78px;color:#97c0e6">Node</span><span class="t m" style="left:1128.44px;top:716.14px;font-size:14.3px;letter-spacing:-0.78px;color:#858a92"> &lt; </span><span class="t m" style="left:1151.84px;top:716.14px;font-size:14.3px;letter-spacing:-0.78px;color:#97c0e6">Object</span>
<svg class="cj" role="img" aria-label="基于" style="left:790.6px;top:739.5px" width="28" height="19.6" viewBox="0 0 28 19.6" fill="#e4e5e7"><text class="bd" x="0" y="14" font-size="14">基于</text></svg><span class="t " style="left:822.24px;top:742.22px;font-size:14.5px;letter-spacing:-0.12px;color:#e4e5e7;font-weight:bold">2D</span><svg class="cj" role="img" aria-label="图块的地图节点。" style="left:844.14px;top:739.5px" width="112" height="19.6" viewBox="0 0 112 19.6" fill="#e4e5e7"><text class="bd" x="0" y="14" font-size="14">图块的地图节点。</text></svg>
<svg class="cj" role="img" aria-label="基于" style="left:790.2px;top:776.5px" width="28" height="19.6" viewBox="0 0 28 19.6" fill="#cdcfd2"><text x="0" y="14" font-size="14">基于</text></svg><span class="t " style="left:821.84px;top:779.22px;font-size:14.5px;letter-spacing:-0.13px;color:#cdcfd2">2D</span><svg class="cj" role="img" aria-label="图块的地图节点。" style="left:843.71px;top:776.5px" width="112" height="19.6" viewBox="0 0 112 19.6" fill="#cdcfd2"><text x="0" y="14" font-size="14">图块的地图节点。</text></svg><span class="t " style="left:955.71px;top:779.22px;font-size:14.5px;letter-spacing:0.12px;color:#e4e5e7;font-weight:bold">TileMapLayer</span><svg class="cj" role="img" aria-label="即图块地图层，需要使用包含了图块列表的" style="left:1053.4px;top:776.5px" width="266" height="19.6" viewBox="0 0 266 19.6" fill="#cdcfd2"><text x="0" y="14" font-size="14">即图块地图层，需要使用包含了图块列表的</text></svg><span class="t m" style="left:1323.49px;top:778.16px;font-size:16.5px;letter-spacing:-0.9px;color:#97c0e6">TileSet</span><svg class="cj" role="img" aria-label="，用于创建基于" style="left:1386.84px;top:776.5px" width="98" height="19.6" viewBox="0 0 98 19.6" fill="#cdcfd2"><text x="0" y="14" font-size="14">，用于创建基于</text></svg>
<svg class="cj" role="img" aria-label="栅格的地图。与已经废弃的" style="left:790.2px;top:795px" width="168" height="19.6" viewBox="0 0 168 19.6" fill="#cdcfd2"><text x="0" y="14" font-size="14">栅格的地图。与已经废弃的</text></svg><span class="t m" style="left:961.69px;top:796.66px;font-size:16.5px;letter-spacing:-0.9px;color:#97c0e6">TileMap</span><svg class="cj" role="img" aria-label="节点不同，" style="left:1028.48px;top:795px" width="70" height="19.6" viewBox="0 0 70 19.6" fill="#cdcfd2"><text x="0" y="14" font-size="14">节点不同，</text></svg><span class="t " style="left:1098.48px;top:797.72px;font-size:14.5px;letter-spacing:0.12px;color:#e4e5e7;font-weight:bold">TileMapLayer</span><svg class="cj" role="img" aria-label="只包含一个图块层。可以使用多个" style="left:1196.17px;top:795px" width="210" height="19.6" viewBox="0 0 210 19.6" fill="#cdcfd2"><text x="0" y="14" font-size="14">只包含一个图块层。可以使用多个</text></svg>
<div class="b " style="left:1508px;top:737px;width:1.5px;height:74px;background:#2b3039;"></div>
<div class="b " style="left:1505.6px;top:737px;width:5.4px;height:26px;background:#6d7177;border-radius:2.7px"></div>
<div class="b " style="left:854px;top:822px;width:105px;height:34px;background:#252b34;border-radius:3px"></div>
<div class="b " style="left:1186px;top:822px;width:105px;height:34px;background:#252b34;border-radius:3px"></div>
<svg class="cj" role="img" aria-label="创建" style="left:891.7px;top:830.3px" width="28" height="19.6" viewBox="0 0 28 19.6" fill="#dcdddf"><text x="0" y="14" font-size="14">创建</text></svg>
<svg class="cj" role="img" aria-label="取消" style="left:1223.7px;top:830.3px" width="28" height="19.6" viewBox="0 0 28 19.6" fill="#dcdddf"><text x="0" y="14" font-size="14">取消</text></svg>
</div>
</body></html>
